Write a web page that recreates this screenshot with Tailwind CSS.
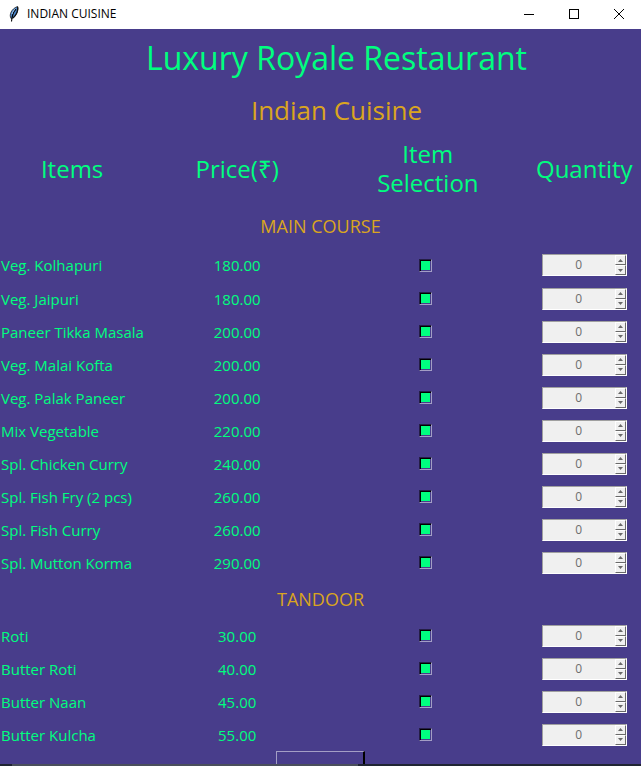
<!DOCTYPE html>
<html lang="en">
<head>
<meta charset="utf-8">
<title>INDIAN CUISINE</title>
<script src="https://cdn.jsdelivr.net/npm/@tailwindcss/browser@4"></script>
</head>
<body class="bg-[#483d8b]">
<div class="relative h-screen overflow-hidden flex flex-col font-['Trebuchet_MS','Open_Sans',sans-serif] text-[#00ff7f]">
  <header class="flex shrink-0 h-[29px] items-center bg-white pl-2 pb-[2px] text-black">
    <svg class="w-3 h-4 shrink-0" viewBox="0 0 12 16" aria-hidden="true">
      <path d="M3 12.500C1 9 3 3 9.500 0.500C11 3 9 9 5 12Z" fill="#4a86cc" stroke="#222" stroke-width=".8"/>
      <path d="M5 12C8.500 9 10.500 4 9.500 .8" fill="none" stroke="#111" stroke-width="1.2"/>
      <path d="M8 3C5 6 4 10 3.500 15.500" fill="none" stroke="#000" stroke-width="1.1"/>
      <path d="M7.500 2.500C6 4 4.500 6 4 8" fill="none" stroke="#a8d0f4" stroke-width="1"/>
    </svg>
    <span class="pl-[7px] text-[12px] font-['Segoe_UI','Open_Sans',sans-serif]">INDIAN CUISINE</span>
    <div class="ml-auto flex h-full">
      <button class="w-[45px] flex items-center justify-center" aria-label="Minimize"><svg width="10" height="10" viewBox="0 0 10 10" shape-rendering="crispEdges"><path d="M0 5.500H10" stroke="#000"/></svg></button>
      <button class="w-[45px] flex items-center justify-center" aria-label="Maximize"><svg width="10" height="10" viewBox="0 0 10 10" shape-rendering="crispEdges"><path d="M.5 .5H9.500V9.500H.5Z" fill="none" stroke="#000"/></svg></button>
      <button class="w-[45px] flex items-center justify-center" aria-label="Close"><svg width="10" height="10" viewBox="0 0 10 10"><path d="M0 0L10 10M10 0L0 10" stroke="#000"/></svg></button>
    </div>
  </header>
  <main class="flex flex-col">
    <h1 class="pl-8 h-[58px] shrink-0 text-center text-[32px] leading-[58px]">Luxury Royale Restaurant</h1>
    <h2 class="pl-8 h-[46px] shrink-0 text-center text-[26px] leading-[46px] text-[#daa520]">Indian Cuisine</h2>
    <table class="w-full table-fixed border-collapse text-[15px] leading-5">
      <colgroup><col class="w-[22.5%]"><col class="w-[29%]"><col class="w-[30.5%]"><col class="w-[18%]"></colgroup>
      <thead>
        <tr class="h-[70px] text-[24px] leading-[29px]"><th class="p-0 font-normal">Items</th><th class="p-0 font-normal">Price(₹)</th><th class="p-0 px-8 font-normal">Item Selection</th><th class="p-0 pl-[2px] font-normal">Quantity</th></tr>
      </thead>
      <tbody id="menu"></tbody>
    </table>
    <button class="mx-auto w-[89px] h-8 shrink-0 border-t border-l border-r-2 border-t-[#a39ec5] border-l-[#a39ec5] border-r-black" aria-label="Continue"></button>
  </main>
  <div class="absolute inset-x-0 bottom-0 h-[2px] bg-[#202533] pl-3"><div class="h-full w-[55%] bg-[#4a4f5c]"></div></div>
</div>
<template id="section">
  <tr class="h-10 first:h-[45px]"><th colspan="4" class="p-0 font-medium text-[18px] text-[#daa520]"></th></tr>
</template>
<template id="row">
  <tr class="h-[33px] nth-2:h-[34px]">
    <td class="p-0 pl-px font-medium whitespace-nowrap"></td>
    <td class="p-0 font-medium text-center"></td>
    <td class="p-0 pr-1"><input type="checkbox" class="block mx-auto appearance-none size-[13px] bg-[#00ff7f] border border-t-[#241e45] border-l-[#241e45] border-r-[#a39ec5] border-b-[#a39ec5] shadow-[inset_1px_1px_0_#000,inset_-1px_-1px_0_#483d8b]"></td>
    <td class="p-0 pl-[2px]">
      <div class="mx-auto flex w-[85px] h-[22px] bg-[#f0f0f0] border border-t-[#a0a0a0] border-l-[#a0a0a0] border-r-white border-b-white">
        <input type="text" value="0" disabled class="min-w-0 flex-1 text-center text-[12px] leading-5 text-[#6d6d6d] font-['Open_Sans',sans-serif]">
        <div class="flex flex-col w-[11px]">
          <button disabled aria-label="Increase" class="flex-1 flex items-center justify-center border border-t-white border-l-white border-r-[#696969] border-b-[#696969]"><svg width="5" height="3" viewBox="0 0 5 3"><path d="M0 3L2.500 0L5 3Z" fill="#696969"/></svg></button>
          <button disabled aria-label="Decrease" class="flex-1 flex items-center justify-center border border-t-white border-l-white border-r-[#696969] border-b-[#696969]"><svg width="5" height="3" viewBox="0 0 5 3"><path d="M0 0L2.500 3L5 0Z" fill="#696969"/></svg></button>
        </div>
      </div>
    </td>
  </tr>
</template>
<script>
const sections = [
  ["MAIN COURSE", [["Veg. Kolhapuri","180.00"],["Veg. Jaipuri","180.00"],["Paneer Tikka Masala","200.00"],["Veg. Malai Kofta","200.00"],["Veg. Palak Paneer","200.00"],["Mix Vegetable","220.00"],["Spl. Chicken Curry","240.00"],["Spl. Fish Fry (2 pcs)","260.00"],["Spl. Fish Curry","260.00"],["Spl. Mutton Korma","290.00"]]],
  ["TANDOOR", [["Roti","30.00"],["Butter Roti","40.00"],["Butter Naan","45.00"],["Butter Kulcha","55.00"]]]
];
const body = document.getElementById("menu");
for (const [title, items] of sections) {
  const head = document.getElementById("section").content.cloneNode(true);
  head.querySelector("th").textContent = title;
  body.append(head);
  for (const [name, price] of items) {
    const row = document.getElementById("row").content.cloneNode(true);
    const cells = row.querySelectorAll("td");
    cells[0].textContent = name;
    cells[1].textContent = price;
    row.querySelector("[type=checkbox]").setAttribute("aria-label", "Select " + name);
    row.querySelector("[type=text]").setAttribute("aria-label", "Quantity of " + name);
    body.append(row);
  }
}
</script>
</body>
</html>
